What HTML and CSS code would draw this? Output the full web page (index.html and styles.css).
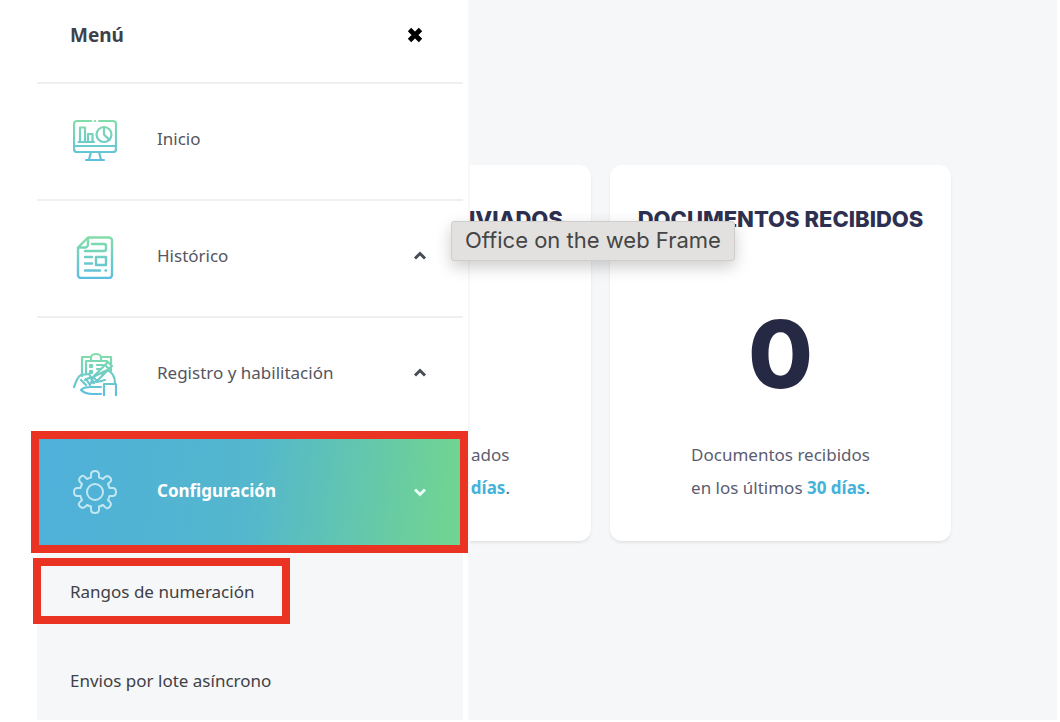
FILE: index.html
```html
<!DOCTYPE html>
<html lang="es">
<head>
<meta charset="utf-8">
<meta name="viewport" content="width=device-width, initial-scale=1">
<title>Menú</title>
<link rel="stylesheet" href="styles.css">
</head>
<body>
<div class="app">
  <main class="content">
    <section class="card">
      <h2 class="card-title">DOCUMENTOS ENVIADOS</h2>
      <p class="card-count">0</p>
      <p class="card-note">Documentos enviados<br>en los últimos <strong>30 días</strong>.</p>
    </section>
    <section class="card">
      <h2 class="card-title">DOCUMENTOS RECIBIDOS</h2>
      <p class="card-count">0</p>
      <p class="card-note">Documentos recibidos<br>en los últimos <strong>30 días</strong>.</p>
    </section>
  </main>

  <aside class="sidebar">
    <header class="sidebar-head">
      <h1 class="sidebar-title">Menú</h1>
      <button class="close" type="button" aria-label="Cerrar">
        <svg width="16" height="16" viewBox="0 0 16 16"><path d="M2.500 2.500L13.500 13.500M13.500 2.500L2.500 13.500" stroke="#000" stroke-width="4.800"/></svg>
      </button>
    </header>
    <nav class="menu">
      <a class="row" href="#">
        <svg class="icon" viewBox="0 0 44 44" fill="none" stroke="url(#tint)" stroke-width="2.200" stroke-linecap="round" stroke-linejoin="round">
          <defs><linearGradient id="tint" gradientUnits="userSpaceOnUse" x1="0" y1="0" x2="0" y2="44"><stop offset="0" stop-color="#84dfa6"/><stop offset="1" stop-color="#5dbde0"/></linearGradient></defs>
          <path d="M18 3H4a3 3 0 0 0-3 3V31a3 3 0 0 0 3 3H40a3 3 0 0 0 3-3V6a3 3 0 0 0-3-3H26M21.900 3h.2M1 28H43M18 34L16 41.500M26 34L28 41.500M13 42H31"/>
          <path d="M5.500 24H21M7 24V9.500H12V24M15 24V16H19.500V24"/>
          <circle cx="31" cy="16.500" r="7.500"/><path d="M31 9V16.500L36.500 22"/>
        </svg>
        <span class="label">Inicio</span>
      </a>
      <button class="row" type="button">
        <svg class="icon" viewBox="0 0 44 44" fill="none" stroke="url(#tint)" stroke-width="2.400" stroke-linecap="round" stroke-linejoin="round">
          <path d="M15 2.500H36a3 3 0 0 1 3 3V40a3 3 0 0 1-3 3H8a3 3 0 0 1-3-3V12.500ZM5.500 12.500H12a3 3 0 0 0 3-3V3"/>
          <path d="M19 9H31a2 2 0 0 1 2 2V14a2 2 0 0 1-2 2H12M12 22H19M12 28.500H19M12 35.500H27M32.500 35.500h.5M23 22H33V30H23Z"/>
        </svg>
        <span class="label">Histórico</span>
        <svg class="chevron" viewBox="0 0 14 14"><path d="M2 8.500L7 3.500L12 8.500"/></svg>
      </button>
      <button class="row" type="button">
        <svg class="icon" viewBox="0 0 44 44" fill="none" stroke="url(#tint)" stroke-width="2.200" stroke-linecap="round" stroke-linejoin="round">
          <path d="M9 24V5H18C19 1 27 1 28 5H38V19M13 22V9H34V11M18 5V9H28V5"/>
          <path d="M17 13H19V15H17ZM17 19H19V21H17ZM24 13H30M24 17H27M17 26H18"/>
          <path d="M18 31L20 25L35 10L39 14L24 29ZM20 25L24 29M32 13L36 17M22 24L32 19"/>
          <path d="M1 35C3 30 4 25 8 23L16 22L18 25L12 28M8 38C11 35 14 35 17 35H28M8 38C12 42 16 42 20 42H28M8 28L13 33M13 27L17 33M17 25L21 31M24 30L32 28M29 22L34 18C39 20 42 24 42 31M31 43V32H43V43"/>
        </svg>
        <span class="label">Registro y habilitación</span>
        <svg class="chevron" viewBox="0 0 14 14"><path d="M2 8.500L7 3.500L12 8.500"/></svg>
      </button>
      <button class="row row-active" type="button" aria-expanded="true">
        <svg class="icon" viewBox="0 0 44 44" fill="none" stroke="#c0e7f2" stroke-width="2" stroke-linejoin="round">
          <path d="M18 7.500V4.500Q18 1 22 1T26 4.500V7.500Q28 8 30 9L32 7Q34.500 5 37 7.500T37 12L35 14Q36 16 36.500 18H39.500Q43 18 43 22T39.500 26H36.500Q36 28 35 30L37 32Q39 34.500 36.500 37T32 37L30 35Q28 36 26 36.500V39.500Q26 43 22 43T18 39.500V36.500Q16 36 14 35L12 37Q9.500 39 7 36.500T7 32L9 30Q8 28 7.500 26H4.500Q1 26 1 22T4.500 18H7.500Q8 16 9 14L7 12Q5 9.500 7.500 7T12 7L14 9Q16 8 18 7.500Z"/>
          <circle cx="22" cy="22" r="8"/>
        </svg>
        <span class="label">Configuración</span>
        <svg class="chevron" viewBox="0 0 14 14"><path d="M2 4.500L7 9.500L12 4.500"/></svg>
      </button>
      <div class="submenu">
        <a class="sub sub-marked" href="#">Rangos de numeración</a>
        <a class="sub" href="#">Envios por lote asíncrono</a>
      </div>
    </nav>
  </aside>

  <div class="tooltip" role="tooltip">Office on the web Frame</div>
</div>
</body>
</html>
```
FILE: styles.css
```css
* { box-sizing: border-box; }
body {
  margin: 0;
  padding: 0 3px 2px 0;
  background: #fff;
  font-family: "Noto Sans", "Open Sans", sans-serif;
  font-size: 17px;
  color: #55565f;
}
h1, h2, p { margin: 0; }
button { font: inherit; color: inherit; border: 0; background: none; cursor: pointer; }
a { color: inherit; text-decoration: none; }

.app {
  position: relative;
  min-height: calc(100vh - 2px);
  background: #f5f7f9;
  overflow: hidden;
}

.content {
  display: grid;
  grid-template-columns: repeat(2, 341px);
  gap: 19px;
  padding: 165px 0 0 250px;
}
.card {
  display: flex;
  flex-direction: column;
  align-items: center;
  padding: 40px 16px 37px;
  border-radius: 12px;
  background: #fff;
  box-shadow: 0 2px 3px rgba(0, 0, 0, .08);
  text-align: center;
}
.card-title {
  font: 800 22px/28px Inter, sans-serif;
  color: #2d3050;
  white-space: nowrap;
}
.card-count {
  margin: 61px 0 24px;
  font: 800 94px/120px Inter, sans-serif;
  color: #262943;
}
.card-note { font-size: 17px; line-height: 33px; color: #5c5d70; }
.card-note strong { color: #45b2da; }

.sidebar {
  position: absolute;
  inset: 0 auto 0 0;
  display: flex;
  flex-direction: column;
  width: 470px;
  padding: 0 5px 0 37px;
  border-right: 2px solid #f8f8f9;
  background: #fff;
}
.sidebar-head {
  display: flex;
  align-items: center;
  justify-content: space-between;
  height: 84px;
  padding: 0 40px 12px 33px;
  border-bottom: 2px solid #efeff0;
}
.sidebar-title { font-size: 19px; line-height: 24px; color: #3f414b; }
.close { display: flex; padding: 0; }

.menu { display: flex; flex: 1; flex-direction: column; }
.row {
  display: flex;
  align-items: center;
  gap: 40px;
  height: 117px;
  padding: 0 36px 4px;
  border-bottom: 2px solid #efeff0;
  text-align: left;
}
.icon { flex: none; width: 44px; height: 44px; }
.label { flex: 1; padding-bottom: 2px; line-height: 24px; }
.chevron {
  flex: none;
  width: 14px;
  height: 14px;
  fill: none;
  stroke: #484d55;
  stroke-width: 3;
}
.row:nth-child(3) { height: 113px; padding-bottom: 2px; border-bottom: 0; }
.row-active {
  height: 122px;
  margin: 0 -5px 0 -6px;
  padding: 0 33px 0 34px;
  border: 8px solid #ea3323;
  background: linear-gradient(96deg, #4fb0da 0%, #54b7cd 50%, #6fd394 96%) padding-box;
  color: #fff;
  font-weight: 700;
}
.row-active .chevron { stroke: #e9fbf5; }

.submenu {
  display: flex;
  flex: 1;
  flex-direction: column;
  align-items: flex-start;
  gap: 25px;
  padding-top: 5px;
  background: #f5f7f9;
  color: #3f4045;
}
.sub { padding: 20px 33px; line-height: 24px; }
.sub-marked {
  margin-left: -4px;
  padding: 14px 28px 12px 29px;
  border: 8px solid #ea3323;
}

.tooltip {
  position: absolute;
  top: 221px;
  left: 451px;
  padding: 4px 13px 6px;
  border: 1px solid #cfcecd;
  border-radius: 3px;
  background: #e3e1df;
  box-shadow: 0 6px 16px rgba(0, 0, 0, .2);
  font: 22px/28px Inter, sans-serif;
  color: #454545;
  white-space: nowrap;
}
```
